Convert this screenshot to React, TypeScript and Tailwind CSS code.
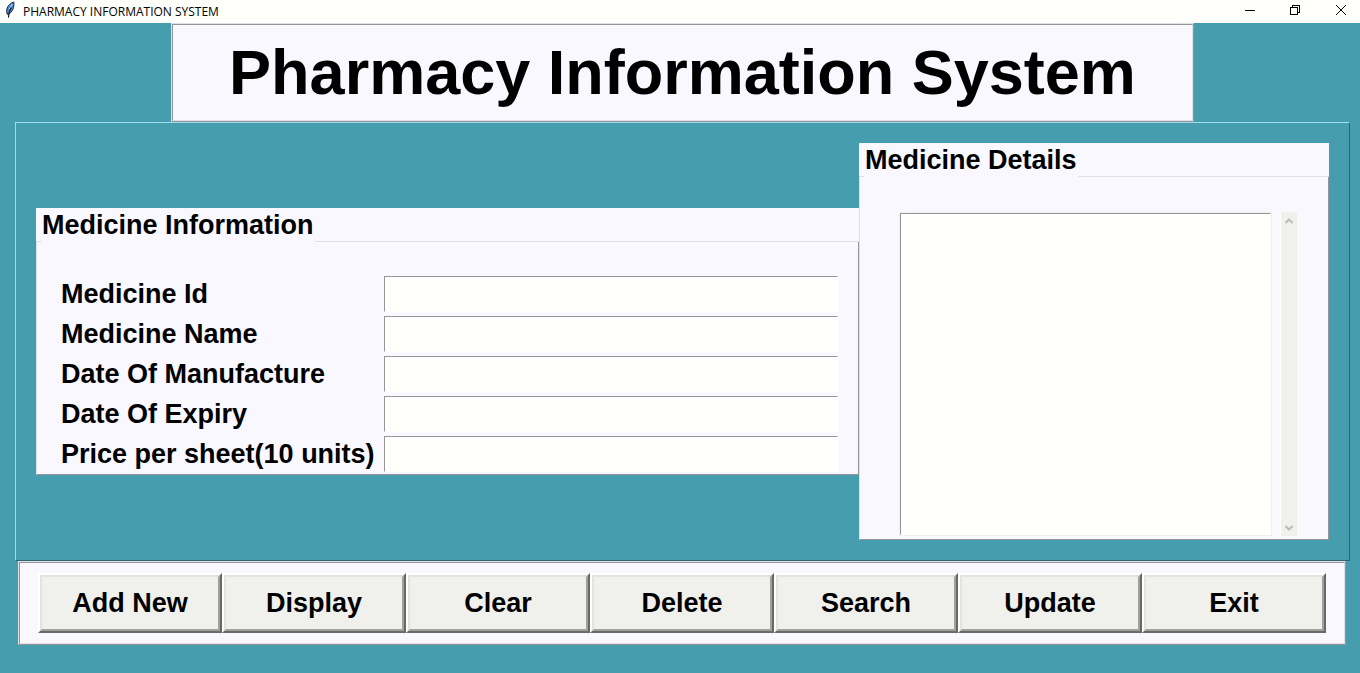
import type { ReactNode } from "react";

const fields = [
  { id: "medicine-id", label: "Medicine Id" },
  { id: "medicine-name", label: "Medicine Name" },
  { id: "manufactured", label: "Date Of Manufacture" },
  { id: "expiry", label: "Date Of Expiry" },
  { id: "price", label: "Price per sheet(10 units)" },
];

const actions = ["Add New", "Display", "Clear", "Delete", "Search", "Update", "Exit"];

function FeatherIcon() {
  return (
    <svg width="16" height="18" viewBox="0 0 16 18" aria-hidden="true">
      <path
        d="M11.8 1C8.6 2 5.8 4.6 4.9 7.8C4.4 9.8 4.6 11.6 5.4 13.4L7.6 12.6C9.8 10.6 11 8.6 11.4 6.6C11.9 4.6 12.1 3 11.8 1Z"
        fill="#4a8ad8"
        stroke="#1c2632"
        strokeWidth="1"
      />
      <path d="M10.2 3.4L7.2 8.4" stroke="#a9d2fb" strokeWidth="1.2" />
      <path d="M9.4 6.2C7.6 9 6.8 12 6.4 16.6" fill="none" stroke="#10151c" strokeWidth="1.1" />
    </svg>
  );
}

function TitleBar() {
  return (
    <header className="flex h-[23px] bg-[#fffffb] pt-px pl-0.5">
      <FeatherIcon />
      <span className="ml-[5px] font-['Open_Sans','Noto_Sans',sans-serif] text-[12px] leading-[22px]">
        PHARMACY INFORMATION SYSTEM
      </span>
      <div className="ml-auto flex">
        <button aria-label="Minimize" className="flex h-[18px] w-11 items-center justify-center">
          <svg width="10" height="10" viewBox="0 0 10 10" shapeRendering="crispEdges">
            <path d="M0 5.5H10" stroke="#000" />
          </svg>
        </button>
        <button aria-label="Restore" className="flex h-[18px] w-[46px] items-center justify-center">
          <svg width="10" height="10" viewBox="0 0 10 10" fill="none" stroke="#000" shapeRendering="crispEdges">
            <path d="M0.5 2.5H7.5V9.5H0.5ZM2.5 2.5V0.5H9.5V7.5H7.5" />
          </svg>
        </button>
        <button aria-label="Close" className="flex h-[18px] w-[42px] items-center justify-center pl-1">
          <svg width="10" height="10" viewBox="0 0 10 10" stroke="#000">
            <path d="M0 0L10 10M10 0L0 10" />
          </svg>
        </button>
      </div>
    </header>
  );
}

function LabelFrame({ title, className, children }: { title: string; className: string; children: ReactNode }) {
  return (
    <section className={`bg-[#f9f8fe] ${className}`}>
      <div className="flex h-[34px]">
        <div className="w-[5px] border-b border-[#dfdfe5]" />
        <h2 className="px-px text-[27px] leading-[34px]">{title}</h2>
        <div className="flex-1 border-b border-[#dfdfe5]" />
      </div>
      <div className="border-r border-b border-l border-r-[#96969a] border-b-[#96969a] border-l-[#dfdfe5]">
        {children}
      </div>
    </section>
  );
}

export default function App() {
  return (
    <div className="min-h-screen bg-[#459dad] font-['Liberation_Sans',Arial,sans-serif] text-black">
      <TitleBar />
      <div className="mr-2.5 ml-[15px]">
        <div className="mx-auto w-fit border border-t-[#dfdfe5] border-r-[#96969a] border-b-[#96969a] border-l-[#dfdfe5]">
          <div className="border border-t-[#96969a] border-r-[#dfdfe5] border-b-[#dfdfe5] border-l-[#96969a] bg-[#f9f8fe] px-14 py-2.5">
            <h1 className="text-[63px] leading-[75px] font-bold whitespace-nowrap">Pharmacy Information System</h1>
          </div>
        </div>

        <main className="flex items-center border border-t-[#9fdce8] border-r-[#2a6570] border-b-[#2a6570] border-l-[#9fdce8] p-5 font-bold">
          <LabelFrame title="Medicine Information" className="flex-1">
            <form className="grid grid-cols-[323px_1fr] pt-8 pr-5 pl-6">
              {fields.map((field) => (
                <div key={field.id} className="col-span-2 grid h-10 grid-cols-subgrid items-center">
                  <label htmlFor={field.id} className="text-[27px] leading-9 whitespace-nowrap">
                    {field.label}
                  </label>
                  <input
                    id={field.id}
                    type="text"
                    className="h-9 w-full min-w-0 border border-t-[#96969a] border-r-[#fffffb] border-b-[#fffffb] border-l-[#96969a] bg-[#fffffb] px-1 text-[27px] outline-none"
                  />
                </div>
              ))}
            </form>
          </LabelFrame>

          <LabelFrame title="Medicine Details" className="w-[470px]">
            <div className="flex h-[362px] pt-[35px] pr-[31px] pb-[3px] pl-[39px]">
              <div className="flex flex-1 border border-[#efefec]">
                <textarea
                  aria-label="Medicine Details"
                  className="w-full resize-none border border-t-[#96969a] border-r-[#fffffb] border-b-[#fffffb] border-l-[#96969a] bg-[#fffffb] outline-none"
                />
              </div>
              <div className="ml-2 flex w-[17px] flex-col items-center justify-between border-l border-[#fffffb] bg-[#f0f0ec] pt-1.5 pb-[5px]">
                <svg width="8" height="6" viewBox="0 0 8 6" fill="none" stroke="#bcbcb8" strokeWidth="2">
                  <path d="M0.5 5L4 1.5L7.5 5" />
                </svg>
                <svg width="8" height="6" viewBox="0 0 8 6" fill="none" stroke="#bcbcb8" strokeWidth="2">
                  <path d="M0.5 1L4 4.5L7.5 1" />
                </svg>
              </div>
            </div>
          </LabelFrame>
        </main>
      </div>

      <div className="mr-3.5 ml-[18px] border border-t-[#dfdfe5] border-r-[#96969a] border-b-[#96969a] border-l-[#dfdfe5]">
        <div className="flex border border-t-[#96969a] border-r-[#dfdfe5] border-b-[#dfdfe5] border-l-[#96969a] bg-[#f9f8fe] px-[18px] py-2.5">
          {actions.map((action) => (
            <button
              key={action}
              className="flex-1 border-2 border-t-[#fffffb] border-r-[#696966] border-b-[#696966] border-l-[#fffffb] bg-[#f0f0ec] text-[27px] font-bold"
            >
              <span className="block border-2 border-t-[#e3e3e0] border-r-[#a0a09c] border-b-[#a0a09c] border-l-[#e3e3e0] py-1.5 leading-10">
                {action}
              </span>
            </button>
          ))}
        </div>
      </div>
    </div>
  );
}
